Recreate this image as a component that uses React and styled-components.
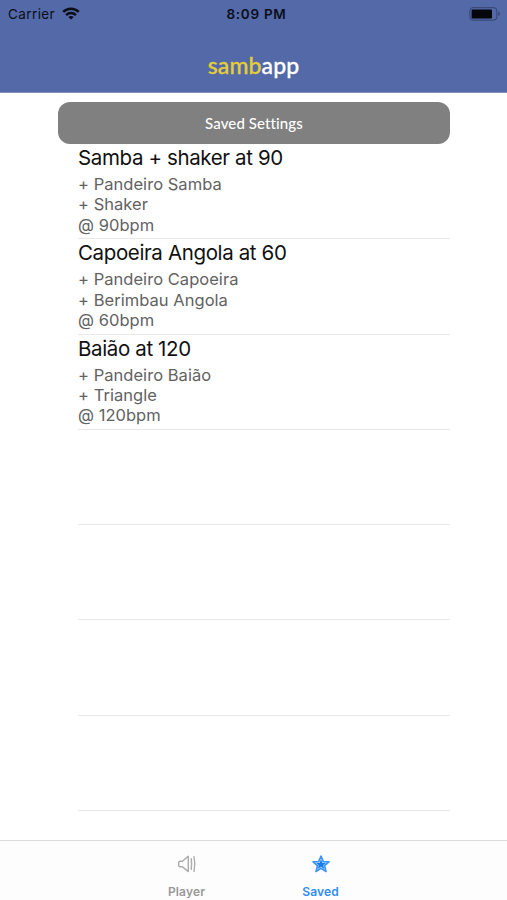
import React from 'react'
import styled, { createGlobalStyle } from 'styled-components';

const settings = [
  { title: 'Samba + shaker at 90', lines: ['+ Pandeiro Samba', '+ Shaker', '@ 90bpm'] },
  { title: 'Capoeira Angola at 60', lines: ['+ Pandeiro Capoeira', '+ Berimbau Angola', '@ 60bpm'] },
  { title: 'Baião at 120', lines: ['+ Pandeiro Baião', '+ Triangle', '@ 120bpm'] },
];

const emptyRows = [1, 2, 3, 4];

const WifiIcon = () => (
  <svg width="18" height="13" viewBox="0 0 18 13" fill="none" stroke="#0b0e18" strokeWidth="2.5">
    <path d="M1.2 4.9C5.5 0.6 12.5 0.6 16.8 4.9" />
    <path d="M4.1 8.1C6.8 5.4 11.2 5.4 13.9 8.1" />
    <path d="M9 12.6L6.3 10C7.8 8.6 10.2 8.6 11.7 10Z" fill="#0b0e18" stroke="none" />
  </svg>
);

const BatteryIcon = () => (
  <svg width="32" height="14" viewBox="0 0 32 14">
    <rect x="0.9" y="0.7" width="27" height="12.4" rx="3" fill="none" stroke="#34426f" strokeWidth="1" />
    <rect x="2.6" y="2.4" width="20.4" height="9" rx="1.2" fill="#05070c" />
    <path d="M29.4 4.8C31.4 5.4 31.4 8.4 29.4 9Z" fill="#34426f" />
  </svg>
);

const SpeakerIcon = () => (
  <svg width="20" height="20" viewBox="0 0 20 20" fill="none" stroke="#ababab" strokeWidth="1.4" strokeLinejoin="round" strokeLinecap="round">
    <path d="M3 7.3H5.4L11.3 2.2V17.6L5.4 12.7H3Q1.7 12.7 1.7 11.4V8.6Q1.7 7.3 3 7.3Z" />
    <path d="M14.2 4.6Q15 10 14.2 15.4" />
    <path d="M17 2.6Q18.6 10 17 17.4" />
  </svg>
);

const StarIcon = () => (
  <svg width="20" height="20" viewBox="0 0 20 20" strokeLinejoin="round">
    <path d="M10 2L12.3 7.5L18 7.9L13.6 11.6L15 17.5L10 14.4L5 17.5L6.4 11.6L2 7.9L7.7 7.5Z" fill="#b5d6fc" stroke="#3d94f5" strokeWidth="1.6" />
    <path d="M10 5.6L11.4 8.9L14.7 9.1L12.2 11.3L13.1 14.7L10 12.8L6.9 14.7L7.8 11.3L5.3 9.1L8.6 8.9Z" fill="#167df0" />
  </svg>
);

const App = () => {
  return <Screen>
    <GlobalStyle />

    <Header>
      <StatusBar>
        <Carrier>Carrier <WifiIcon /></Carrier>
        <Clock>8:09 PM</Clock>
        <Battery><BatteryIcon /></Battery>
      </StatusBar>
      <Logo><span>samb</span>app</Logo>
    </Header>

    <Content>
      <Banner>Saved Settings</Banner>
      <List>
        {settings.map((item) => (
          <Row key={item.title}>
            <h3>{item.title}</h3>
            {item.lines.map((line) => <p key={line}>{line}</p>)}
          </Row>
        ))}
        {emptyRows.map((row) => <Row key={row} />)}
      </List>
    </Content>

    <TabBar>
      <Tab><SpeakerIcon />Player</Tab>
      <Tab $active><StarIcon />Saved</Tab>
    </TabBar>
  </Screen>
};

const GlobalStyle = createGlobalStyle`
* {
  box-sizing: border-box;
  margin: 0;
  padding: 0;
}

body {
  background: #fff;
  font-family: Inter, 'Liberation Sans', sans-serif;
}

svg {
  display: block;
}
`;

const Screen = styled.div`
display: flex;
flex-direction: column;
height: 900px;
overflow: hidden;
background: #fff;
`;

const Header = styled.header`
flex: none;
height: 93px;
background: #5369a8;
border-bottom: 1px solid #8291bd;
`;

const StatusBar = styled.div`
display: grid;
grid-template-columns: 1fr auto 1fr;
align-items: center;
height: 27px;
padding: 0 6px 0 8px;
color: #0b0e18;
font-size: 13.5px;
`;

const Carrier = styled.div`
display: flex;
align-items: center;
gap: 7px;
letter-spacing: 0.4px;
`;

const Clock = styled.div`
font-weight: 600;
letter-spacing: 0.7px;
padding-left: 4px;
`;

const Battery = styled.div`
display: flex;
justify-content: flex-end;
`;

const Logo = styled.h1`
margin-top: 23px;
color: #fff;
font-family: Lato, sans-serif;
font-size: 23px;
font-weight: 500;
line-height: 30px;
letter-spacing: 0.1px;
text-align: center;
-webkit-text-stroke: 0.3px currentColor;

span {
  color: #e5ce35;
}
`;

const Content = styled.main`
flex: 1;
min-height: 0;
padding: 9px 57px 0 58px;
`;

const Banner = styled.h2`
height: 42px;
border-radius: 12px;
background: #808080;
color: #fff;
font-family: Lato, sans-serif;
font-size: 15px;
font-weight: 500;
line-height: 43px;
letter-spacing: 0.1px;
text-align: center;
`;

const List = styled.ul`
padding-left: 20px;
list-style: none;
`;

const Row = styled.li`
height: 95.3px;
border-bottom: 1px solid #e8e8e8;

h3 {
  color: #111;
  font-size: 20.5px;
  font-weight: 400;
  line-height: 28px;
  letter-spacing: -0.37px;
  padding-bottom: 2px;
}

p {
  color: #626262;
  font-size: 16.5px;
  line-height: 20.4px;
  letter-spacing: 0.04px;
}
`;

const TabBar = styled.nav`
flex: none;
display: flex;
justify-content: center;
height: 60px;
border-top: 1px solid #dcdcdc;
background: #fdfdfd;
`;

const Tab = styled.div`
display: flex;
flex-direction: column;
align-items: center;
width: 134px;
padding-top: 13px;
gap: 10px;
color: ${({ $active }) => ($active ? '#2f8df5' : '#999')};
font-size: 12px;
font-weight: 600;
line-height: 16px;
letter-spacing: 0.15px;
`;

export default App;
